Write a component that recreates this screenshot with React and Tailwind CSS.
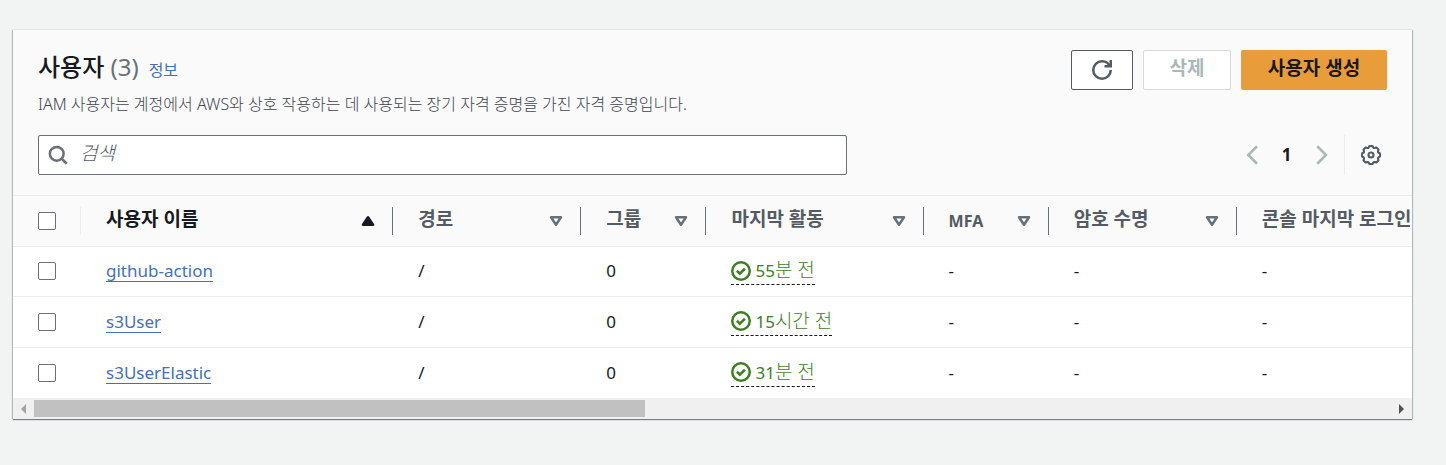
const COLUMNS = [
  { key: 'name', label: '사용자 이름', width: 'w-[312px]', sorted: true },
  { key: 'path', label: '경로', width: 'w-[188px]' },
  { key: 'groups', label: '그룹', width: 'w-[125px]' },
  { key: 'activity', label: '마지막 활동', width: 'w-[217px]' },
  { key: 'mfa', label: 'MFA', width: 'w-[125px]', latin: true },
  { key: 'passwordAge', label: '암호 수명', width: 'w-[188px]' },
  { key: 'consoleLogin', label: '콘솔 마지막 로그인', width: 'w-[250px]' },
];

const USERS = [
  { name: 'github-action', amount: '55', unit: '분 전' },
  { name: 's3User', amount: '15', unit: '시간 전' },
  { name: 's3UserElastic', amount: '31', unit: '분 전' },
];

function Icon({ children, className = '' }) {
  return (
    <svg
      viewBox="0 0 16 16"
      fill="none"
      stroke="currentColor"
      strokeWidth="2"
      aria-hidden="true"
      className={`h-5 w-5 shrink-0 ${className}`}
    >
      {children}
    </svg>
  );
}

function Checkbox({ label }) {
  return (
    <input
      type="checkbox"
      aria-label={label}
      className="block h-[18px] w-[18px] appearance-none rounded-[2px] border border-[#687078] bg-white checked:bg-[#0073bb]"
    />
  );
}

function HeaderCell({ column }) {
  return (
    <th scope="col" aria-sort={column.sorted ? 'ascending' : undefined} className="p-0">
      <button
        type="button"
        className={`flex h-7 w-full items-center justify-between border-l pr-[14px] pl-[25px] text-left font-bold whitespace-nowrap ${
          column.sorted ? 'border-[#eaeded] text-[#16191f]' : 'border-[#687078] text-[#545b64]'
        }`}
      >
        <span className={column.latin ? 'text-[16px] leading-6' : 'pb-1 text-[19px] leading-6'}>
          {column.label}
        </span>
        {column.sorted ? (
          <Icon>
            <path d="M4 11h8L8 5z" fill="currentColor" strokeLinejoin="round" />
          </Icon>
        ) : (
          <Icon className="text-[#687078]">
            <path d="M4 5h8l-4 6z" strokeLinejoin="round" />
          </Icon>
        )}
      </button>
    </th>
  );
}

export default function App() {
  return (
    <main
      lang="ko"
      className="min-h-screen bg-[#f2f3f3] pt-[30px] pr-[34px] pb-[46px] pl-[13px] font-['Noto_Sans','Noto_Sans_CJK_KR',sans-serif] text-[17px] leading-6 text-[#16191f]"
    >
      <section className="overflow-hidden bg-white shadow-[0_1px_1px_0_rgba(0,28,36,0.5),1px_0_1px_0_rgba(0,28,36,0.2),-1px_0_1px_0_rgba(0,28,36,0.2)]">
        <header className="border-b border-[#eaeded] bg-[#fafafa] px-[25px] pt-5 pb-5">
          <div className="flex items-start justify-between">
            <div>
              <div className="flex items-baseline">
                <h1 className="text-[24px] leading-[34px] font-medium">
                  사용자 <span className="font-normal text-[#687078]">(3)</span>
                </h1>
                <a href="#info" className="ml-[10px] text-[16px] text-[#4570b5]">
                  정보
                </a>
              </div>
              <p className="mt-2 text-[16px] font-light text-[#3f4650]">
                IAM 사용자는 계정에서 AWS와 상호 작용하는 데 사용되는 장기 자격 증명을 가진 자격 증명입니다.
              </p>
            </div>
            <div className="flex gap-[10px] text-[19px] font-bold">
              <button
                type="button"
                aria-label="새로 고침"
                className="flex h-10 w-[62px] items-center justify-center rounded-[2px] border border-[#545b64] bg-white text-[#545b64]"
              >
                <Icon>
                  <path d="M10 5h5V0" />
                  <path d="M15 8a6.957 6.957 0 0 1-7 7 6.957 6.957 0 0 1-7-7 6.957 6.957 0 0 1 7-7 6.87 6.87 0 0 1 6.3 4" />
                </Icon>
              </button>
              <button
                type="button"
                disabled
                className="h-10 w-[88px] rounded-[2px] border border-[#d5dbdb] bg-white pb-1 text-[#aab7b8]"
              >
                삭제
              </button>
              <button type="button" className="h-10 w-[146px] rounded-[2px] bg-[#e89c3a] pb-1">
                사용자 생성
              </button>
            </div>
          </div>
          <div className="mt-[19px] flex items-center justify-between">
            <label className="flex h-10 w-3/5 items-center rounded-[2px] border border-[#687078] bg-white pl-[9px] text-[#687078]">
              <Icon>
                <circle cx="7" cy="7" r="5.5" />
                <path d="m11 11 4 4" />
              </Icon>
              <input
                type="search"
                aria-label="검색"
                placeholder="검색"
                className="ml-3 h-full min-w-0 flex-1 bg-transparent pb-1 text-[19px] font-light italic outline-none placeholder:text-[#545b64]"
              />
            </label>
            <div className="flex h-10 items-center">
              <button type="button" disabled aria-label="이전 페이지" className="text-[#aab7b8]">
                <Icon>
                  <path d="M12 1 5 8l7 7" />
                </Icon>
              </button>
              <button type="button" aria-current="page" className="w-[49px] text-center font-bold">
                1
              </button>
              <button type="button" disabled aria-label="다음 페이지" className="text-[#aab7b8]">
                <Icon>
                  <path d="m5 1 7 7-7 7" />
                </Icon>
              </button>
              <div className="ml-[13px] flex h-10 items-center border-l border-[#eaeded] pr-[6px] pl-4">
                <button type="button" aria-label="기본 설정" className="block text-[#545b64]">
                  <Icon>
                    <path
                      strokeWidth="1.7"
                      strokeLinejoin="round"
                      d="M6 2.2L6.6 1Q8 .5 9.4 1L10 2.2Q10.5 2.5 11.1 2.4L12.2 2Q13.4 2.6 14 3.8L13.6 4.9Q13.5 5.5 13.8 6L15 6.6Q15.5 8 15 9.4L13.8 10Q13.5 10.5 13.6 11.1L14 12.2Q13.4 13.4 12.2 14L11.1 13.6Q10.5 13.5 10 13.8L9.4 15Q8 15.5 6.6 15L6 13.8Q5.5 13.5 4.9 13.6L3.8 14Q2.6 13.4 2 12.2L2.4 11.1Q2.5 10.5 2.2 10L1 9.4Q.5 8 1 6.6L2.2 6Q2.5 5.5 2.4 4.9L2 3.8Q2.6 2.6 3.8 2L4.9 2.4Q5.5 2.5 6 2.2Z"
                    />
                    <circle cx="8" cy="8" r="2" strokeWidth="1.7" />
                  </Icon>
                </button>
              </div>
            </div>
          </div>
        </header>

        <div className="overflow-hidden">
          <table className="w-full min-w-[1473px] table-fixed border-collapse text-left">
            <colgroup>
              <col className="w-[67px]" />
              {COLUMNS.map((column) => (
                <col key={column.key} className={column.width} />
              ))}
            </colgroup>
            <thead>
              <tr className="h-[50px] border-b border-[#eaeded] bg-[#fafafa]">
                <th scope="col" className="p-0 pl-[25px]">
                  <Checkbox label="모든 사용자 선택" />
                </th>
                {COLUMNS.map((column) => (
                  <HeaderCell key={column.key} column={column} />
                ))}
              </tr>
            </thead>
            <tbody>
              {USERS.map((user) => (
                <tr key={user.name} className="h-[51px] border-b border-[#eaeded] first:h-[50px] last:border-b-0">
                  <td className="p-0 pl-[25px]">
                    <Checkbox label={user.name} />
                  </td>
                  <td className="p-0 pl-[26px]">
                    <a href={`#${user.name}`} className="inline-block border-b border-[#4570b5] leading-[21px] text-[#4570b5]">
                      {user.name}
                    </a>
                  </td>
                  <td className="p-0 pl-[26px]">/</td>
                  <td className="p-0 pl-[26px]">0</td>
                  <td className="p-0 pl-[26px]">
                    <span className="inline-flex h-7 items-center gap-1 border-b border-dashed border-[#16191f] align-middle text-[#3f7e23]">
                      <Icon>
                        <circle cx="8" cy="8" r="7" />
                        <path d="m4.7 7.8 2.4 2.4 4-4" />
                      </Icon>
                      <span>
                        {user.amount}
                        <span className="text-[19px] font-light">{user.unit}</span>
                      </span>
                    </span>
                  </td>
                  <td className="p-0 pl-[26px]">-</td>
                  <td className="p-0 pl-[26px]">-</td>
                  <td className="p-0 pl-[26px]">-</td>
                </tr>
              ))}
            </tbody>
          </table>
        </div>

        <div className="flex h-[21px] items-center bg-[#f0f0f0]">
          <button type="button" aria-label="왼쪽으로 스크롤" className="flex w-[21px] justify-center text-[#a3a3a3]">
            <svg viewBox="0 0 5 10" className="h-[10px] w-[5px]" fill="currentColor" aria-hidden="true">
              <path d="M5 0v10L0 5z" />
            </svg>
          </button>
          <div className="flex-1">
            <div className="h-[17px] w-[45%] bg-[#c1c1c1]" />
          </div>
          <button type="button" aria-label="오른쪽으로 스크롤" className="flex w-[21px] justify-center text-[#505050]">
            <svg viewBox="0 0 5 10" className="h-[10px] w-[5px]" fill="currentColor" aria-hidden="true">
              <path d="M0 0v10l5-5z" />
            </svg>
          </button>
        </div>
      </section>
    </main>
  );
}
